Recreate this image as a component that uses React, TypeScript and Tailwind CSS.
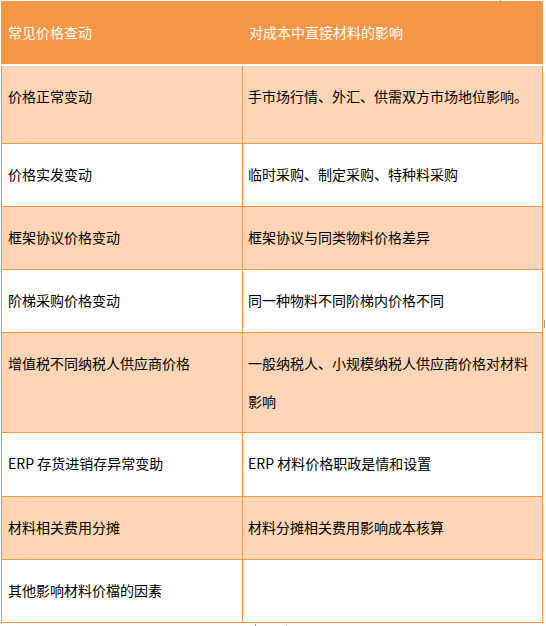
const rows: { left: string; right: React.ReactNode; h: string; shade: boolean }[] = [
  { left: '价格正常变动', right: '手市场行情、外汇、供需双方市场地位影响。', h: 'h-[78px]', shade: true },
  { left: '价格实发变动', right: '临时采购、制定采购、特种料采购', h: 'h-[63px]', shade: false },
  { left: '框架协议价格变动', right: '框架协议与同类物料价格差异', h: 'h-[63px]', shade: true },
  { left: '阶梯采购价格变动', right: '同一种物料不同阶梯内价格不同', h: 'h-[63px]', shade: false },
  {
    left: '增值税不同纳税人供应商价格',
    right: (
      <>
        一般纳税人、小规模纳税人供应商价格对材料
        <br />
        影响
      </>
    ),
    h: 'h-[100px]',
    shade: true,
  },
  { left: 'ERP 存货进销存异常变助', right: 'ERP 材料价格职政是情和设置', h: 'h-[64px]', shade: false },
  { left: '材料相关费用分摊', right: '材料分摊相关费用影响成本核算', h: 'h-[63px]', shade: true },
  { left: '其他影响材料价檔的因素', right: '', h: 'h-[63px]', shade: false },
];

export default function App() {
  return (
    <div
      className="relative w-[546px] h-[626px] bg-white pl-[1px] pt-[1px] text-[14px] text-black"
      style={{ fontFamily: '"Noto Sans CJK SC", "Noto Sans", sans-serif' }}
    >
      {/* editor resize handles */}
      <div className="absolute left-[500px] top-0 w-px h-[4px] bg-gray-400" />
      <div className="absolute left-[544px] top-[320px] w-px h-[8px] bg-gray-400" />
      <div className="absolute left-[255px] top-[624px] w-px h-[2px] bg-gray-400" />
      <div className="absolute left-[286px] top-[624px] w-px h-[2px] bg-gray-300" />

      <div className="w-[542px]">
        {/* header */}
        <div className="flex h-[63px] items-center bg-[#F79646] text-white">
          <div className="w-[243px] pl-[7px]">常见价格查动</div>
          <div className="flex-1 pl-[5px]">对成本中直接材料的影响</div>
        </div>
        <div className="h-[2px] bg-white" />

        {/* body */}
        <div className="border-x border-[#F79646]">
          {rows.map((r, i) => (
            <div
              key={i}
              className={`flex ${r.h} border-b border-[#F79646] ${r.shade ? 'bg-[#FBD5B5]' : 'bg-white'}`}
            >
              <div className="w-[241px] shrink-0 border-r border-[#F79646] pl-[6px] pt-[11px] leading-[38px] whitespace-nowrap">
                {r.left}
              </div>
              <div className="flex-1 pl-[5px] pt-[11px] leading-[38px] whitespace-nowrap">{r.right}</div>
            </div>
          ))}
        </div>
      </div>
    </div>
  );
}
